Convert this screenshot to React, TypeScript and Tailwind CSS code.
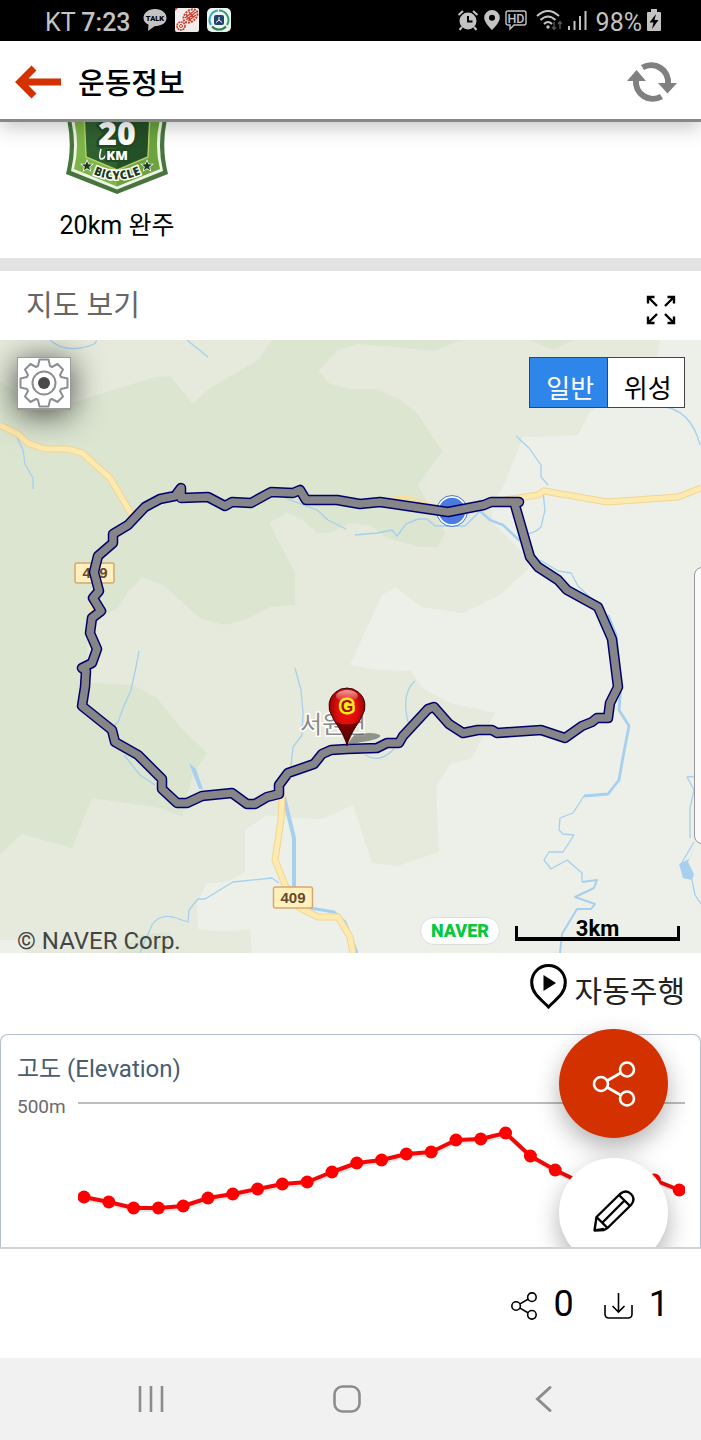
import { useState } from "react";

const ROUTE =
  "M181 488L175 496L160 499L145 507L128 525L113 534V543L98 556L94 572L99 591L93 598L101 611L92 618L90 633L97 649L92 663L82 668L86 671L85 687L82 706L112 730L115 742L138 755L162 779V789L177 803H187L202 796L232 793L247 804H255L267 797L279 794V785L288 773L314 764L322 754L331 750L347 749L377 748L387 743H399L403 736L428 709L434 707L449 724L463 733L478 730H492L497 733L541 730L565 738L582 726L592 722L597 718L608 718L610 703L618 687L612 639L598 607L567 590L558 580L538 567L530 557L515 505L519 502H491L484 505L448 512L380 502L360 504L337 500H306L300 490L293 493L271 492L251 503L232 502L225 506L208 497L181 498Z";

const RIVERS = [
  "M50 340Q62 351 80 348T96 340",
  "M187 340L208 357",
  "M17 437L23 450L25 464L33 478V489",
  "M285 498L317 510L328 520L346 529",
  "M139 651L136 667L131 690L124 706L118 722L113 727",
  "M124 755L140 775L155 785",
  "M295 668L301 690L303 712L302 735L293 747L291 766",
  "M516 436L529 448L541 465L541 477L548 485M543 492L545 510L541 527Q535 533 527 534",
  "M540 560L558 571L571 573L578 586L596 603",
  "M415 681Q401 693 408 722",
  "M365 755Q380 764 394 749",
  "M660 406Q691 409 700 445",
  "M140 953Q145 940 152 925Q159 914 173 917L188 922L189 910L198 899H205L233 882L272 878L279 883",
  "M701 776L687 777L694 790L690 808V838",
  "M694 842L681 864L692 880L695 895L701 904",
  "M584 796L573 813L560 818L559 830L563 834L574 835L563 852H549L544 860L551 869L567 860L582 873V882",
];

const ELEVATION = [
  102, 107, 113, 113, 111, 103, 99, 94, 89, 87, 77, 68, 65, 59, 57, 45, 44, 38,
  61, 75, 87, 99, 93, 85, 95,
];

const stepX = (i: number) => 6 + i * 24.8;

const ShareIcon = ({ size }: { size: string }) => (
  <svg
    className={size}
    viewBox="0 0 44 46"
    fill="none"
    stroke="currentColor"
    strokeWidth="2.6"
  >
    <circle cx="9" cy="23" r="7" />
    <circle cx="35" cy="8.500" r="7" />
    <circle cx="35" cy="37.500" r="7" />
    <path d="M15.500 19.500L28.500 12M15.500 26.500L28.500 34" />
  </svg>
);

// 상태바
const StatusBar = () => (
  <div className="flex h-[41px] items-center justify-between bg-black pl-[45px] pr-10 text-2xl text-[#c4c4c4]">
    <div className="flex items-center gap-2">
      <span className="mr-1 pt-1 text-[25px]">
        KT <span className="font-medium">7:23</span>
      </span>
      <svg className="h-6 w-6" viewBox="0 0 24 24">
        <path
          d="M12 1C5 1 .5 5 .5 10c0 3 2 5.500 5 6.800L5 23l6.500-4.800C18.500 18 23.500 15 23.500 10S19 1 12 1z"
          fill="#c4c4c4"
        />
        <text
          x="12"
          y="13"
          textAnchor="middle"
          fontSize="7.500"
          fontWeight="900"
          fill="#000"
        >
          TALK
        </text>
      </svg>
      <svg className="h-6 w-6" viewBox="0 0 24 24">
        <rect width="24" height="24" rx="2" fill="#f5eeee" />
        <path d="M0 0h3L0 3z" fill="#c84030" />
        <g stroke="#c84030" fill="none">
          <ellipse
            cx="15.500"
            cy="8"
            rx="8"
            ry="5.500"
            transform="rotate(-40 15.500 8)"
            strokeWidth="2"
            strokeDasharray="2 1"
          />
          <path
            d="M10 10l9-7M11 12l10-8M13 13l8-6M11 6l5 7M14 4l5 6"
            strokeWidth="1.400"
          />
          <circle cx="6" cy="18" r="4" strokeWidth="1.600" strokeDasharray="2 .6" />
          <circle cx="6" cy="18" r="1.500" />
        </g>
      </svg>
      <svg className="h-6 w-6" viewBox="0 0 24 24">
        <rect width="24" height="24" rx="5" fill="#eef5f3" />
        <g fill="none" strokeWidth="2">
          <path d="M12 2.500A9.500 9.500 0 0 1 20 17" stroke="#35a06a" />
          <path d="M19 18.500A9.500 9.500 0 0 1 5 18.500" stroke="#2c8050" />
          <path d="M4 17A9.500 9.500 0 0 1 11 2.500" stroke="#3aa6c0" />
        </g>
        <rect x="7" y="7" width="10" height="10" rx="2" fill="#24436b" />
        <path d="M12 9v3l-3 2.500M12 12l3 2.500" stroke="#fff" fill="none" />
      </svg>
    </div>
    <div className="flex items-center gap-[5px]">
      <svg className="h-[22px] w-[22px]" viewBox="0 0 22 22" fill="none">
        <circle cx="11" cy="12" r="8.500" fill="#c4c4c4" />
        <path
          d="M1.500 6L6 2M20.500 6L16 2M5 18l-2.500 3M17 18l2.500 3"
          stroke="#c4c4c4"
          strokeWidth="2"
        />
        <path d="M11 7v5.500h4.500" stroke="#000" strokeWidth="2" />
      </svg>
      <svg className="h-[22px] w-4" viewBox="0 0 16 22">
        <path
          fillRule="evenodd"
          d="M8 1a7.800 7.800 0 0 0-7.800 7.800C.2 14 8 21 8 21s7.800-7 7.800-12.200A7.800 7.800 0 0 0 8 1zm0 4.800a3 3 0 1 1 0 6 3 3 0 0 1 0-6z"
          fill="#c4c4c4"
        />
      </svg>
      <svg className="h-[22px] w-[22px]" viewBox="0 0 22 22">
        <path
          d="M3 2h16q2 0 2 2v10q0 2-2 2H9l-4 4v-4H3q-2 0-2-2V4q0-2 2-2z"
          fill="none"
          stroke="#c4c4c4"
          strokeWidth="1.400"
        />
        <text
          x="11"
          y="13.500"
          textAnchor="middle"
          fontSize="12.500"
          fontWeight="500"
          fill="#c4c4c4"
        >
          HD
        </text>
      </svg>
      <svg className="ml-1 h-[22px] w-[26px]" viewBox="0 0 26 22" fill="none">
        <g stroke="#c4c4c4" strokeWidth="2">
          <path d="M1 7Q12-3 23 7" />
          <path d="M4.500 11Q12 4 19.500 11" />
          <path d="M8 15Q12 11 16 15" />
        </g>
        <circle cx="12" cy="18" r="1.700" fill="#c4c4c4" />
        <path
          d="M18 13v7m-2-2l2 2.500 2-2.500M24 20v-7m-2 2l2-2.500 2 2.500"
          stroke="#555"
          strokeWidth="1.400"
        />
      </svg>
      <svg
        className="h-[22px] w-5"
        viewBox="0 0 20 22"
        stroke="#c4c4c4"
        strokeWidth="2"
      >
        <path d="M2 17v4M7.500 12v9M13 7v14M18.500 2v19" />
      </svg>
      <span className="ml-1 pt-1 text-[25px]">98%</span>
      <svg className="h-[22px] w-[14px]" viewBox="0 0 14 22">
        <path d="M4 0h6v3h3q1 0 1 1v17q0 1-1 1H1q-1 0-1-1V4q0-1 1-1h3z" fill="#c4c4c4" />
        <path d="M9 5L2.500 13.500H6.500L5 20l6.500-9H7.500z" fill="#000" />
      </svg>
    </div>
  </div>
);

// 상단 헤더
const Header = () => (
  <header className="relative z-10 flex h-[81px] items-center justify-between border-b-[3px] border-[#888888] bg-white pl-[14px] pr-6 pt-1 shadow-[0_4px_20px_rgba(0,0,0,0.25)]">
    <div className="flex items-center gap-4">
      <button type="button" aria-label="뒤로">
        <svg
          className="h-9 w-12"
          viewBox="14 64 48 36"
          fill="none"
          stroke="#d33200"
          strokeWidth="7"
        >
          <path d="M61 82H22M34 68L20 82L34 96" />
        </svg>
      </button>
      <h1 className="pt-1 text-[29px] font-medium leading-10 text-black">
        운동정보
      </h1>
    </div>
    <button type="button" aria-label="새로고침">
      <svg className="h-[42px] w-[50px]" viewBox="627 61 50 42">
        <g fill="none" stroke="#808080" strokeWidth="6">
          <path d="M642.500 67.500A17 17 0 0 1 668 84" />
          <path d="M661.500 96.500A17 17 0 0 1 636 80" />
        </g>
        <path d="M658 83H677L667.500 93.500ZM627 81H646L636.500 70Z" fill="#808080" />
      </svg>
    </button>
  </header>
);

// 완주 배지
const Badge = () => (
  <section className="flex h-[136px] px-4">
    <figure className="flex w-[202px] flex-col items-center">
      <svg className="h-[74px] w-28" viewBox="61 122 112 74">
        <path
          d="M65 112Q74 142 66 174L117 194L168 174Q160 142 169 112Z"
          fill="#47763d"
        />
        <path
          d="M69 112Q78 142 71 171L117 189.500L163 171Q156 142 165 112Z"
          fill="#eef4e6"
        />
        <path d="M72 112Q81 142 74 169L117 186.500V112Z" fill="#7db548" />
        <path d="M162 112Q153 142 160 169L117 186.500V112Z" fill="#6ba33e" />
        <path
          d="M84 112L86 157L117 170L148 157L150 112Z"
          fill="#2f6130"
          stroke="#b7cf6b"
          strokeWidth="1.500"
        />
        <path d="M117 112H149L147 156L117 169Z" fill="#245027" />
        <path
          d="M101 149q-3 11 1 10t6-10"
          fill="none"
          stroke="#fff"
          strokeWidth="1.500"
        />
        <g
          fill="#fff"
          stroke="#204a22"
          paintOrder="stroke"
          textAnchor="middle"
          fontFamily="Open Sans, sans-serif"
          fontWeight="800"
        >
          <text x="117" y="145" fontSize="32" strokeWidth="5">
            20
          </text>
          <text x="117" y="160" fontSize="13" strokeWidth="4">
            KM
          </text>
        </g>
        <path id="badge-curve" d="M89 172Q117 187 145 172" fill="none" />
        <text
          fontFamily="Open Sans, sans-serif"
          fontSize="12"
          fontWeight="800"
          fill="#1d3d1d"
          stroke="#fff"
          strokeWidth="3"
          paintOrder="stroke"
          textAnchor="middle"
        >
          <textPath href="#badge-curve" startOffset="50%">
            BICYCLE
          </textPath>
        </text>
        <g
          fill="#1d3d1d"
          stroke="#fff"
          strokeWidth="1.500"
          paintOrder="stroke"
        >
          <path
            id="badge-star"
            d="M87 161l1.300 3.200 3.700.2-2.800 2.300.9 3.500-3.100-2-3.100 2 .9-3.500-2.800-2.300 3.700-.2z"
          />
          <use href="#badge-star" x="60" />
        </g>
      </svg>
      <figcaption className="mt-[10px] text-[25px] leading-10 text-black">
        20km 완주
      </figcaption>
    </figure>
  </section>
);

const MapDrawing = () => (
  <svg className="block h-auto w-full" viewBox="0 340 701 613">
    <rect y="340" width="701" height="613" fill="#ecf0e9" />
    <path
      d="M0 340H660L655 370L590 412L578 435L523 437L503 487L492 503V522L530 560L527 570L500 595L463 613L422 607L395 587L382 595L350 665L377 670L411 671L422 688L450 703L495 713L472 758L450 764L436 787L439 852L398 866L372 863L353 805L322 819L297 818L267 815L245 830V872L227 882L207 883L197 903L198 929L223 932L250 929L252 953H27L24 940H0Z"
      fill="#e5eadc"
    />
    <path
      d="M0 380L20 396L75 402L155 377L170 376L193 404L210 388L258 360L272 340H460L435 351L385 346L358 344L338 350L318 371L330 384L350 389H377L400 400L417 413L442 451L418 485L430 507L445 533L437 547L420 547L387 538L370 525L350 523L330 533H317L302 519L287 513L269 523L295 573V605L270 607L245 620L224 625L200 618L163 585L142 577L128 592L118 608L100 618L87 633L88 683L133 685L157 698L180 727L207 753L193 773L182 817L160 808L92 798L72 848L22 834L0 854Z"
      fill="#dbe5d0"
    />
    <path d="M530 340L553 350L573 340ZM115 953L140 935L170 932L168 953Z" fill="#dbe5d0" />

    {/* 하천 */}
    <g fill="none" stroke="#a6d0ee" strokeLinejoin="round">
      {RIVERS.map((d) => (
        <path key={d} d={d} strokeWidth="1.300" />
      ))}
      <path
        d="M355 535L377 533L392 530L397 536L406 524L418 519H427L435 526H465L480 511"
        strokeWidth="1.400"
      />
      <path
        d="M582 882L597 880L594 888L575 897L595 904L591 909H577L562 934L560 953"
        strokeWidth="2"
      />
      <path d="M480 511L490 520L503 525L520 541" strokeWidth="2.500" />
      <path
        d="M608 615L616 635L621 685L619 710L629 726L623 757L619 780L608 794L584 796"
        strokeWidth="2.800"
      />
      <path d="M284 797L294 838V890" strokeWidth="4" />
      <path d="M310 908L334 912L345 922L357 953" strokeWidth="3" />
    </g>
    <path
      d="M189 763L196 769L203 789L199 789ZM697 842L689 859L679 864L683 878L692 880L694 874L688 862Z"
      fill="#a6d0ee"
    />

    {/* 도로 */}
    {[
      ["#f2d596", "7"],
      ["#fdeaae", "5"],
    ].map(([color, width]) => (
      <g key={color} fill="none" stroke={color} strokeWidth={width}>
        <path d="M0 425L18 434L28 443L45 449H68L82 453L110 478L135 520" />
        <path d="M505 500L538 495L544 491L607 502L678 497L701 488" />
        <path d="M282 795L281 820L275 860L285 885L300 908L318 917H338L350 937L353 953" />
      </g>
    ))}
    <path
      d="M380 501L398 498H408L440 508M92 600V620"
      fill="none"
      stroke="#f7dfa2"
      strokeWidth="4"
    />

    <g
      fontFamily="Liberation Sans, sans-serif"
      fontSize="15"
      fontWeight="700"
      textAnchor="middle"
      fill="#654b2c"
    >
      <rect
        x="75"
        y="563"
        width="39"
        height="20"
        rx="2"
        fill="#fff0bd"
        stroke="#d8a76c"
        strokeWidth="1.500"
      />
      <text x="95" y="578">
        409
      </text>
      <rect
        x="273.500"
        y="887"
        width="39"
        height="21"
        rx="2"
        fill="#fff0bd"
        stroke="#d8a76c"
        strokeWidth="1.500"
      />
      <text x="293" y="903">
        409
      </text>
    </g>

    <circle
      cx="452"
      cy="511"
      r="14"
      fill="#4a7be0"
      stroke="#fff"
      strokeWidth="1.500"
    />
    <circle cx="452" cy="511" r="15.500" fill="none" stroke="#4a7be0" />

    <text
      x="333"
      y="733"
      textAnchor="middle"
      fontFamily="Noto Sans CJK KR, sans-serif"
      fontSize="24"
      fill="#8a8a8a"
      stroke="#fff"
      strokeWidth="3"
      paintOrder="stroke"
    >
      서원면
    </text>

    {/* 주행 경로 */}
    <g fill="none" strokeLinejoin="round" strokeLinecap="round">
      <path d={ROUTE} stroke="#00006e" strokeWidth="10.500" />
      <path d={ROUTE} stroke="#868688" strokeWidth="7.500" />
    </g>

    {/* 도착 마커 */}
    <defs>
      <radialGradient id="pin-fill" cx="0.500" cy="0.350" r="0.650">
        <stop offset="0" stopColor="#f0150f" />
        <stop offset="0.450" stopColor="#dc0c0c" />
        <stop offset="1" stopColor="#5e0000" />
      </radialGradient>
      <linearGradient id="pin-gloss" x1="0" y1="0" x2="0" y2="1">
        <stop offset="0" stopColor="#fff" stopOpacity="0.600" />
        <stop offset="1" stopColor="#fff" stopOpacity="0.050" />
      </linearGradient>
    </defs>
    <path
      d="M347 745L354 735Q372 731 380 735Q382 739 362 742Z"
      fill="#555"
      opacity="0.600"
    />
    <path
      d="M347 746C345 732 336 726 332 716A18 18 0 1 1 362 716C358 726 349 732 347 746Z"
      fill="url(#pin-fill)"
      stroke="#350505"
    />
    <path d="M336 722Q347 727 358 722L347 745Z" fill="#4d0000" opacity="0.700" />
    <ellipse cx="347" cy="696" rx="11" ry="6" fill="url(#pin-gloss)" />
    <text
      x="347"
      y="712"
      textAnchor="middle"
      fontFamily="Liberation Sans, sans-serif"
      fontSize="16"
      fontWeight="700"
      fill="#a01000"
      stroke="#ffe81a"
      strokeWidth="5"
      strokeLinejoin="round"
      paintOrder="stroke"
    >
      G
    </text>
  </svg>
);

const MapSection = () => {
  const [mapType, setMapType] = useState("일반");

  return (
    <section>
      <div className="flex h-[69px] items-center justify-between pl-[26px] pr-[25px]">
        <h2 className="text-[29px] leading-10 text-[#666666]">지도 보기</h2>
        <button type="button" aria-label="전체 화면" className="mt-2">
          <svg
            className="h-[30px] w-[30px]"
            viewBox="0 0 30 30"
            fill="none"
            stroke="#000"
            strokeWidth="2.400"
          >
            <path d="M2 8.500V2H8.500M2 2L11 11M21.500 2H28V8.500M28 2L19 11M2 21.500V28H8.500M2 28L11 19M21.500 28H28V21.500M28 28L19 19" />
          </svg>
        </button>
      </div>
      <div className="relative overflow-hidden">
        <MapDrawing />

        <button
          type="button"
          aria-label="지도 설정"
          className="absolute left-[17px] top-[17px] flex h-[53px] w-[54px] items-center justify-center border border-b-2 border-[#999999] bg-white shadow-[0_4px_32px_rgba(0,0,0,0.7)]"
        >
          <svg
            className="h-[50px] w-[50px]"
            viewBox="-25 -25 50 50"
            fill="none"
            stroke="#8c8f91"
            strokeWidth="2"
            strokeLinejoin="round"
          >
            <path d="M-6 -17L-4.500 -23.500H4.500L6 -17L8 -16L13.500 -19L19 -13.500L16 -8L17 -6L23.500 -4.500V4.500L17 6L16 8L19 13.500L13.500 19L8 16L6 17L4.500 23.500H-4.500L-6 17L-8 16L-13.500 19L-19 13.500L-16 8L-17 6L-23.500 4.500V-4.500L-17 -6L-16 -8L-19 -13.500L-13.500 -19L-8 -16Z" />
            <circle r="11.500" />
            <circle r="6" fill="#4a4a4a" stroke="none" />
          </svg>
        </button>

        <div className="absolute right-4 top-[17px] flex h-[51px] w-[156px] divide-x divide-[#444444] border border-[#444444] bg-white text-[26px]">
          {["일반", "위성"].map((type) => (
            <button
              key={type}
              type="button"
              onClick={() => setMapType(type)}
              className={
                mapType === type
                  ? "flex-1 bg-[#2f86ea] pl-1 pt-3 leading-9 text-white"
                  : "flex-1 bg-white pl-1 pt-3 leading-9 text-black"
              }
            >
              {type}
            </button>
          ))}
        </div>

        <div className="absolute -right-4 top-[227px] h-[277px] w-[23px] rounded-lg border border-[#999999] bg-[#fafafa]" />

        <p className="absolute -bottom-1 left-[17px] text-2xl leading-8 text-[#444444]">
          © NAVER Corp.
        </p>
        <div className="absolute bottom-2 right-[21px] flex items-end gap-[15px]">
          <span className="flex h-7 w-20 items-center justify-center rounded-full border border-[#dddddd] bg-white text-lg font-black text-[#06c93f]">
            NAVER
          </span>
          <div className="relative mb-1 h-[15px] w-[165px] border-x-[3px] border-b-4 border-black">
            <span className="absolute inset-x-0 -bottom-1 text-center text-[22px] font-bold leading-6 text-black">
              3km
            </span>
          </div>
        </div>
      </div>
    </section>
  );
};

// 고도 그래프
const ElevationCard = () => (
  <section className="h-[215px] overflow-hidden rounded-t-lg border-x border-b-2 border-t border-x-[#b4c0cc] border-b-[#d2d2d2] border-t-[#b4c0cc] pl-4 pr-[15px] pt-4">
    <h2 className="text-2xl leading-9 text-[#475d70]">고도 (Elevation)</h2>
    <div className="mt-2 flex">
      <span className="w-[61px] shrink-0 text-[19px] leading-6 text-[#6b6b6b]">
        500m
      </span>
      <svg className="h-auto min-w-0 flex-1" viewBox="0 0 607 152">
        <path d="M0 8H607" stroke="#bdbdbd" strokeWidth="2" />
        <g fill="none" strokeWidth="4" strokeLinejoin="round">
          <polyline
            points={ELEVATION.map((y, i) => `${stepX(i) + 1},${y + 2}`).join(" ")}
            stroke="#000"
            opacity="0.100"
          />
          <polyline
            points={ELEVATION.map((y, i) => `${stepX(i)},${y}`).join(" ")}
            stroke="#f00808"
          />
        </g>
        {ELEVATION.map((y, i) => (
          <circle key={i} cx={stepX(i)} cy={y} r="6.500" fill="#ff0000" />
        ))}
      </svg>
    </div>
  </section>
);

export default function App() {
  return (
    <div className="min-h-screen bg-white font-['Roboto','Noto_Sans_CJK_KR',sans-serif]">
      <StatusBar />
      <Header />

      <main className="relative overflow-hidden">
        <Badge />
        <div className="h-[13px] bg-[#e3e3e3]" />
        <MapSection />
        <div className="flex h-[81px] justify-end pr-4 pt-[11px]">
          <button type="button" className="flex items-start gap-2 text-[#222222]">
            <svg className="h-[45px] w-[37px]" viewBox="0 0 37 45">
              <path
                d="M18.500 1.500A16.800 16.800 0 0 0 1.700 18.500C1.700 30 12 36 18.500 43C25 36 35.300 30 35.300 18.500A16.800 16.800 0 0 0 18.500 1.500Z"
                fill="none"
                stroke="#000"
                strokeWidth="3"
              />
              <path d="M13.500 11V27L26 19Z" fill="#000" />
            </svg>
            <span className="pt-[10px] text-[30px] leading-9">자동주행</span>
          </button>
        </div>
        <ElevationCard />

        {/* 플로팅 버튼 */}
        <div className="absolute -bottom-[18px] right-[33px] flex flex-col gap-5">
          <button
            type="button"
            aria-label="공유"
            className="flex h-[109px] w-[109px] items-center justify-center rounded-full bg-[#d33200] text-white shadow-[0_10px_24px_rgba(0,0,0,0.3)]"
          >
            <ShareIcon size="h-[46px] w-11" />
          </button>
          <button
            type="button"
            aria-label="편집"
            className="flex h-[109px] w-[109px] items-center justify-center rounded-full bg-white shadow-[0_10px_24px_rgba(0,0,0,0.3)]"
          >
            <svg
              className="mb-1 h-[42px] w-[42px]"
              viewBox="0 0 42 42"
              fill="none"
              stroke="#000"
              strokeWidth="2.400"
              strokeLinejoin="round"
            >
              <path d="M1.500 40.500L3.500 27L27 4Q33-1 38 4T38 15L14.500 38L11 40ZM3.500 27L14.500 38M9 33L32 10M26 5L37 16M1.500 40.500L11 39" />
            </svg>
          </button>
        </div>
        <div className="absolute inset-x-0 bottom-0 h-[2px] bg-[#d2d2d2]" />
      </main>

      <div className="flex h-[109px] items-center justify-end gap-[30px] pr-8 text-4xl text-black">
        <span className="flex items-center gap-4">
          <ShareIcon size="mt-1 h-7 w-7" />0
        </span>
        <span className="flex items-center gap-4">
          <svg
            className="mt-1 h-7 w-[29px]"
            viewBox="0 0 29 28"
            fill="none"
            stroke="currentColor"
            strokeWidth="1.600"
          >
            <path d="M1 13V22Q1 26 5 26H24Q28 26 28 22V13M14.500 1V20M8.500 14L14.500 20L20.500 14" />
          </svg>
          1
        </span>
      </div>

      <nav className="grid h-[82px] grid-cols-3 items-center justify-items-center bg-[#f1f1f1] pl-[53px] pr-[59px] text-[#8c8c8c]">
        <button type="button" aria-label="최근 앱">
          <svg
            className="h-7 w-7"
            viewBox="0 0 28 28"
            stroke="currentColor"
            strokeWidth="2.600"
          >
            <path d="M3 1V27M14 1V27M25 1V27" />
          </svg>
        </button>
        <button type="button" aria-label="홈">
          <svg
            className="h-7 w-7"
            viewBox="0 0 28 28"
            fill="none"
            stroke="currentColor"
            strokeWidth="2.600"
          >
            <rect x="1.500" y="1.500" width="25" height="25" rx="8" />
          </svg>
        </button>
        <button type="button" aria-label="이전">
          <svg
            className="h-7 w-7"
            viewBox="0 0 28 28"
            fill="none"
            stroke="currentColor"
            strokeWidth="3"
            strokeLinecap="round"
          >
            <path d="M20 2.500L7.500 14L20 25.500" />
          </svg>
        </button>
      </nav>
    </div>
  );
}
